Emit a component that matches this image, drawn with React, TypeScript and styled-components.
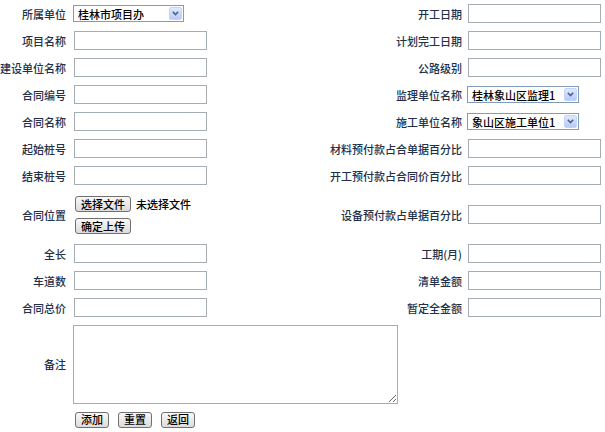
import styled, { createGlobalStyle } from "styled-components";

const GlobalStyle = createGlobalStyle`
  html, body {
    margin: 0;
    padding: 0;
    background: #fff;
  }
  body {
    font: 500 11px "Noto Sans CJK SC", "Noto Sans", sans-serif;
    color: #22304a;
  }
`;

type Field =
  | { kind: "text" }
  | { kind: "select"; value: string; width: number };

type RowSpec = {
  left: string;
  leftField: Field | "file";
  right?: string;
  rightField?: Field;
  height?: number;
};

const text: Field = { kind: "text" };

const rows: RowSpec[] = [
  { left: "所属单位", leftField: { kind: "select", value: "桂林市项目办", width: 111 }, right: "开工日期", rightField: text },
  { left: "项目名称", leftField: text, right: "计划完工日期", rightField: text },
  { left: "建设单位名称", leftField: text, right: "公路级别", rightField: text },
  { left: "合同编号", leftField: text, right: "监理单位名称", rightField: { kind: "select", value: "桂林象山区监理1", width: 112 } },
  { left: "合同名称", leftField: text, right: "施工单位名称", rightField: { kind: "select", value: "象山区施工单位1", width: 112 } },
  { left: "起始桩号", leftField: text, right: "材料预付款占合单据百分比", rightField: text },
  { left: "结束桩号", leftField: text, right: "开工预付款占合同价百分比", rightField: text },
  { left: "合同位置", leftField: "file", right: "设备预付款占单据百分比", rightField: text, height: 51 },
  { left: "全长", leftField: text, right: "工期(月)", rightField: text },
  { left: "车道数", leftField: text, right: "清单金额", rightField: text },
  { left: "合同总价", leftField: text, right: "暂定全金额", rightField: text },
];

const Form = styled.form`
  width: 605px;
  display: flex;
  flex-direction: column;
`;

const Row = styled.div<{ $h: number }>`
  display: grid;
  grid-template-columns: 70px 250px 146px 139px;
  height: ${({ $h }) => $h}px;
  align-items: center;
`;

const Label = styled.div`
  text-align: right;
  padding-right: 4px;
  white-space: nowrap;
`;

const Cell = styled.div<{ $pad: number; $span?: number }>`
  display: flex;
  align-items: center;
  padding-left: ${({ $pad }) => $pad}px;
  ${({ $span }) => ($span ? `grid-column: span ${$span};` : "")}
`;

const TextInput = styled.input`
  box-sizing: border-box;
  display: block;
  width: 133px;
  height: 19px;
  margin: 0;
  padding: 0 2px;
  border: 1px solid #a5acb2;
  font: inherit;
  color: #000;
  background: #fff;
`;

const SelectBox = styled.div<{ $w: number }>`
  position: relative;
  box-sizing: border-box;
  width: ${({ $w }) => $w}px;
  height: 17px;
  border: 1px solid #7f9db9;
  background: #fff;
`;

const NativeSelect = styled.select`
  appearance: none;
  display: block;
  width: 100%;
  height: 100%;
  margin: 0;
  padding: 0 0 0 4px;
  border: 0;
  outline: none;
  background: transparent;
  font: 500 11px "Noto Sans CJK SC", "Noto Sans", sans-serif;
  color: #000;
`;

const Arrow = styled.span`
  position: absolute;
  top: 1px;
  right: 1px;
  bottom: 1px;
  width: 13px;
  box-sizing: border-box;
  display: flex;
  align-items: center;
  justify-content: center;
  border: 1px solid #c3d3fd;
  border-radius: 2px;
  background: linear-gradient(#e0e9fd, #b7cbf6);
  pointer-events: none;
`;

const Button = styled.button`
  box-sizing: border-box;
  height: 16px;
  margin: 0;
  padding: 0 5px;
  border: 1px solid #707070;
  border-radius: 3px;
  background: linear-gradient(#f8f8f8, #dcdcdc);
  font: 500 11px "Noto Sans CJK SC", "Noto Sans", sans-serif;
  line-height: 13px;
  color: #000;
`;

const FileStack = styled.div`
  display: flex;
  flex-direction: column;
  align-items: flex-start;
  gap: 6px;
  padding-top: 1px;
  padding-left: 1px;
`;

const FileLine = styled.div`
  display: flex;
  align-items: center;
  gap: 5px;
  color: #000;
`;

const Memo = styled.textarea`
  box-sizing: border-box;
  display: block;
  width: 325px;
  height: 79px;
  margin: 0;
  border: 1px solid #a5acb2;
  font: inherit;
`;

const Actions = styled.div`
  display: flex;
  gap: 9px;
  padding-left: 1px;
`;

const Chevron = () => (
  <svg width="7" height="5" viewBox="0 0 7 5">
    <polyline points="0.8,0.8 3.5,3.6 6.2,0.8" fill="none" stroke="#4d6185" strokeWidth="1.6" />
  </svg>
);

const renderField = (f: Field) =>
  f.kind === "text" ? (
    <TextInput type="text" />
  ) : (
    <SelectBox $w={f.width}>
      <NativeSelect defaultValue={f.value}>
        <option>{f.value}</option>
      </NativeSelect>
      <Arrow>
        <Chevron />
      </Arrow>
    </SelectBox>
  );

const App = () => (
  <>
    <GlobalStyle />
    <Form onSubmit={e => e.preventDefault()}>
      {rows.map(r => (
        <Row key={r.left} $h={r.height ?? 27}>
          <Label>{r.left}</Label>
          <Cell $pad={r.leftField !== "file" && r.leftField.kind === "select" ? 3 : 4}>
            {r.leftField === "file" ? (
              <FileStack>
                <FileLine>
                  <Button type="button">选择文件</Button>
                  未选择文件
                </FileLine>
                <Button type="button">确定上传</Button>
              </FileStack>
            ) : (
              renderField(r.leftField)
            )}
          </Cell>
          <Label>{r.right}</Label>
          <Cell $pad={r.rightField?.kind === "select" ? 1 : 2}>
            {r.rightField && renderField(r.rightField)}
          </Cell>
        </Row>
      ))}
      <Row $h={86}>
        <Label>备注</Label>
        <Cell $pad={3} $span={3}>
          <Memo />
        </Cell>
      </Row>
      <Row $h={25}>
        <span />
        <Cell $pad={4} $span={3}>
          <Actions>
            <Button type="button">添加</Button>
            <Button type="button">重置</Button>
            <Button type="button">返回</Button>
          </Actions>
        </Cell>
      </Row>
    </Form>
  </>
);

export default App;
